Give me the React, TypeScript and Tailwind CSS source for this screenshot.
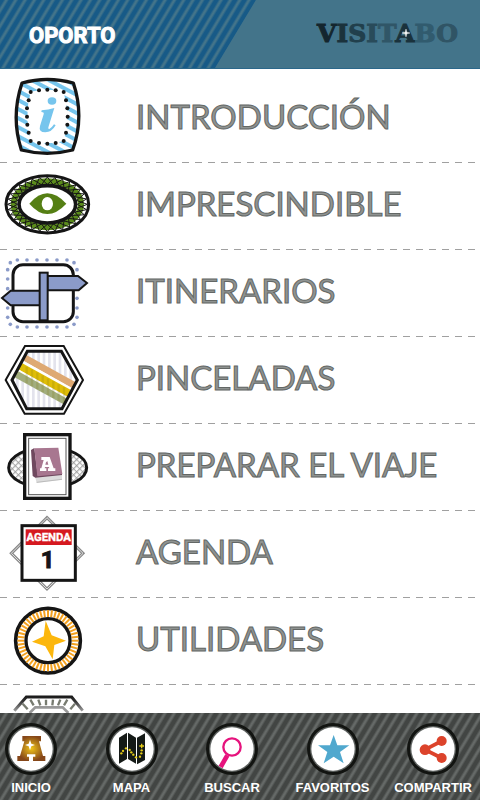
import React from 'react';

const IntroIcon = () => (
  <svg viewBox="0 18 300 261" className="w-[100px] h-[87px] shrink-0" aria-hidden="true">
    <defs>
      <pattern id="introStripes" width="24" height="24" patternUnits="userSpaceOnUse" patternTransform="rotate(28)">
        <rect width="24" height="24" fill="#fff" />
        <rect width="24" height="12" fill="#76c5ed" />
      </pattern>
    </defs>
    <path d="M66 39Q142 17 220 39Q254 140 218 240Q142 260 64 240Q32 140 66 39Z" fill="url(#introStripes)" stroke="#151515" strokeWidth="10" strokeLinejoin="round" />
    <path d="M92 65Q142 53 191 65Q212 140 191 213Q142 227 92 213Q72 140 92 65Z" fill="#fff" />
    {[
      [92, 66], [117, 61], [142, 59], [167, 61], [191, 66],
      [86, 91], [81, 115], [81, 140], [82, 164], [86, 188],
      [198, 91], [202, 115], [203, 140], [202, 164], [198, 188],
      [92, 213], [117, 219], [142, 221], [167, 219], [191, 213],
    ].map(([x, y]) => <circle key={`${x}-${y}`} cx={x} cy={y} r="6" fill="#151515" />)}
    <ellipse cx="156" cy="93" rx="13" ry="11" fill="#76c5ed" />
    <path d="M125 121Q145 119 163 114L146 169Q143 178 148 177Q154 175 162 163L167 166Q155 187 136 187Q115 187 120 168L131 133Q133 126 124 126Z" fill="#76c5ed" />
  </svg>
);

const EyeIcon = () => {
  const zigzag = (offset: number) =>
    Array.from({ length: 33 }, (_, i) => {
      const a = (i / 32) * Math.PI * 2;
      const out = (i + offset) % 2 === 0;
      return `${142 + Math.cos(a) * (out ? 120 : 90)},${118 + Math.sin(a) * (out ? 82 : 60)}`;
    }).join(' ');

  return (
    <svg viewBox="0 -6 300 261" className="w-[100px] h-[87px] shrink-0" aria-hidden="true">
      <ellipse cx="142" cy="118" rx="124" ry="86" fill="#fff" stroke="#151515" strokeWidth="9" />
      <ellipse cx="142" cy="118" rx="101" ry="69" fill="none" stroke="#5b8c1c" strokeWidth="18" />
      <polyline points={zigzag(0)} fill="none" stroke="#151515" strokeWidth="3" />
      <polyline points={zigzag(1)} fill="none" stroke="#151515" strokeWidth="3" />
      <ellipse cx="142" cy="118" rx="85" ry="56" fill="#fff" stroke="#151515" strokeWidth="11" />
      <path d="M88 116Q115 85 142 85Q170 85 199 116Q170 147 142 147Q115 147 88 116Z" fill="#557f14" />
      <ellipse cx="142" cy="116" rx="17" ry="20" fill="#fff" />
    </svg>
  );
};

const SignIcon = () => (
  <svg viewBox="0 0 300 261" className="w-[100px] h-[87px] shrink-0" aria-hidden="true">
    {[52, 81, 111, 141, 171, 201].map((x) => (
      <g key={x} fill="#8b9bc9">
        <circle cx={x} cy="30" r="5.5" />
        <circle cx={x} cy="231" r="5.5" />
      </g>
    ))}
    {[38, 59, 87, 116, 145, 174, 202, 223].map((y, i) => {
      const edge = i === 0 || i === 7;
      return (
        <g key={y} fill="#8b9bc9">
          <circle cx={edge ? 31 : 23} cy={y} r="5.5" />
          <circle cx={edge ? 222 : 231} cy={y} r="5.5" />
        </g>
      );
    })}
    <rect x="39" y="44" width="181" height="171" rx="30" fill="#fff" stroke="#151515" strokeWidth="9" />
    <path d="M142 78H234L261 99L236 121H142Z" fill="#8b9bc9" stroke="#151515" strokeWidth="6" />
    <path d="M120 122H32L6 144L32 166H120Z" fill="#8b9bc9" stroke="#151515" strokeWidth="6" />
    <rect x="119" y="68" width="24" height="143" fill="#8b9bc9" stroke="#151515" strokeWidth="6" />
  </svg>
);

const HexagonIcon = () => (
  <svg viewBox="0 -3 300 261" className="w-[100px] h-[87px] shrink-0" aria-hidden="true">
    <defs>
      <clipPath id="hexClip">
        <path d="M82 42H184L232 126L186 210H80L36 126Z" />
      </clipPath>
    </defs>
    <path d="M75 24H191L249 126L192 227H74L17 126Z" fill="#fff" stroke="#151515" strokeWidth="6" />
    <g clipPath="url(#hexClip)">
      {[48, 64, 80, 96, 112, 128, 144, 160, 176, 192, 208, 224].map((x) => (
        <rect key={x} x={x} y="35" width="8" height="180" fill="#e3e3ec" />
      ))}
      <path d="M78 50L230 134V158L66 66Z" fill="#dea973" />
      <path d="M66 66L220 152L214 160L58 74Z" fill="#fff" />
      <path d="M60 72L214 157V182L52 92Z" fill="#dfbd08" />
      <path d="M52 92L206 180L200 186L46 98Z" fill="#fff" />
      <path d="M44 94L204 184V206L44 118Z" fill="#a2ad7d" />
      {[80, 96, 112, 128, 144, 160, 176, 192].map((x) => (
        <path key={x} d={`M${x} ${x * 0.55 + 42}V${x * 0.55 + 92}`} stroke="#7c7410" strokeOpacity=".2" strokeWidth="7" />
      ))}
    </g>
    <path d="M82 40H184L232 126L186 212H80L36 126Z" fill="none" stroke="#151515" strokeWidth="9" />
  </svg>
);

const BookIcon = () => (
  <svg viewBox="0 -3 300 261" className="w-[100px] h-[87px] shrink-0" aria-hidden="true">
    <defs>
      <pattern id="lattice" width="13" height="13" patternUnits="userSpaceOnUse" patternTransform="rotate(45)">
        <rect width="13" height="13" fill="#fff" />
        <path d="M0 2H13M2 0V13" stroke="#999" strokeWidth="3" />
      </pattern>
    </defs>
    <ellipse cx="143" cy="128" rx="117" ry="61" fill="url(#lattice)" stroke="#151515" strokeWidth="9" />
    <rect x="74" y="29" width="136" height="191" fill="#fff" stroke="#151515" strokeWidth="10" />
    <rect x="86" y="40" width="112" height="169" fill="#fff" stroke="#555" strokeWidth="3" />
    <path d="M105 155L186 148V164L110 174Z" fill="#ddd" />
    <path d="M110 172L186 163" stroke="#aaa" strokeWidth="2" />
    <path d="M93 75L103 69L113 149L186 146V150L106 158L98 153Z" fill="#70495f" />
    <path d="M103 70L175 68L187 147L112 154Z" fill="#a87790" />
    <path d="M124 96H149L161 130H166V138H144V130H148L147 126H135L134 130H139V138H120V130H124L131 105H124ZM138 112L136 119H145L142 108Z" fill="#fff" fillRule="evenodd" />
  </svg>
);

const CalendarIcon = () => (
  <svg viewBox="0 3 300 261" className="w-[100px] h-[87px] shrink-0" aria-hidden="true">
    <path d="M141 23L249 130L141 237L34 130Z" fill="#fff" stroke="#888" strokeWidth="9" />
    <path d="M141 23L249 130L141 237L34 130Z" fill="none" stroke="#ddd" strokeWidth="3" />
    <rect x="66" y="47" width="160" height="164" fill="#fff" stroke="#151515" strokeWidth="9" />
    <rect x="77" y="58" width="138" height="47" fill="#d51920" />
    <text x="146" y="94" textAnchor="middle" fill="#fff" stroke="#fff" strokeWidth="1" fontSize="34" fontWeight="700" className="font-['Roboto',sans-serif]">AGENDA</text>
    <text x="143" y="173" textAnchor="middle" fill="#151515" stroke="#151515" strokeWidth="3" fontSize="72" fontWeight="700" className="font-['Roboto',sans-serif]">1</text>
  </svg>
);

const CompassIcon = () => (
  <svg viewBox="0 0 300 261" className="w-[100px] h-[87px] shrink-0" aria-hidden="true">
    <circle cx="144" cy="128" r="97" fill="#fff" stroke="#151515" strokeWidth="11" />
    {Array.from({ length: 48 }, (_, i) => (
      <path key={i} d="M144 36V57" stroke="#f4a11f" strokeWidth="6" transform={`rotate(${i * 7.5} 144 128)`} />
    ))}
    <circle cx="144" cy="128" r="66" fill="#fff" stroke="#151515" strokeWidth="10" />
    <path d="M137 68L155 112L198 128L163 141L158 184L136 145L96 131L131 115Z" fill="#fcb70d" />
  </svg>
);

const PartialIcon = () => (
  <svg viewBox="0 261 300 261" className="w-[100px] h-[87px] shrink-0" aria-hidden="true">
    <defs>
      <linearGradient id="partialFade" x1="0" y1="292" x2="0" y2="343" gradientUnits="userSpaceOnUse">
        <stop offset="0" stopColor="#151515" />
        <stop offset=".35" stopColor="#333" />
        <stop offset="1" stopColor="#aaa" />
      </linearGradient>
    </defs>
    <path d="M43 338L79 297H215L248 338" fill="none" stroke="url(#partialFade)" strokeWidth="9" />
    <path d="M89 345L106 328H188L205 345" fill="none" stroke="#999" strokeWidth="8" />
    <path d="M68 317L83 334M91 305L101 322M115 305L121 322M138 305V322M159 305L157 322M181 305L174 322M202 305L192 322M225 317L211 334" stroke="#777b70" strokeWidth="7" />
  </svg>
);

const sections = [
  { label: 'INTRODUCCIÓN', Icon: IntroIcon },
  { label: 'IMPRESCINDIBLE', Icon: EyeIcon },
  { label: 'ITINERARIOS', Icon: SignIcon },
  { label: 'PINCELADAS', Icon: HexagonIcon },
  { label: 'PREPARAR EL VIAJE', Icon: BookIcon },
  { label: 'AGENDA', Icon: CalendarIcon },
  { label: 'UTILIDADES', Icon: CompassIcon },
  { label: '', Icon: PartialIcon },
];

const brandLetters = [
  ['V', 'text-[#14262e]'],
  ['I', 'text-[#1b323c]'],
  ['S', 'text-[#213f4c]'],
  ['I', 'text-[#294b5a]'],
  ['T', 'text-[#305667]'],
  ['A', 'text-[#1a323c]'],
  ['B', 'text-[#315b6e]'],
  ['O', 'text-[#305465]'],
];

interface TabButtonProps {
  label: string;
  children: React.ReactNode;
}

// Each drawing uses a 156 unit square, centred on the round badge
const TabButton: React.FC<TabButtonProps> = ({ label, children }) => (
  <button type="button" className="flex w-[52px] flex-col items-center">
    <svg viewBox="0 0 156 156" className="w-[52px] h-[52px] shrink-0" aria-hidden="true">
      <circle cx="78" cy="78" r="78" fill="#121411" />
      <circle cx="78" cy="78" r="69" fill="#5d615f" />
      <circle cx="78" cy="78" r="65" fill="#fff" />
      {children}
    </svg>
    <span className="mt-[5px] whitespace-nowrap text-[13px] leading-4 font-bold text-white">{label}</span>
  </button>
);

export default function App() {
  return (
    <div className="flex h-screen flex-col overflow-hidden bg-white font-['Liberation_Sans',sans-serif]">
      <header className="relative flex h-[69px] shrink-0 items-center justify-between border-b border-[#2b678a] bg-[#43748a] pl-[29px] pr-[22px]">
        <div className="absolute inset-y-0 left-0 w-[256px] bg-[repeating-linear-gradient(121deg,#175a87_0_3px,#43748a_5px_6px,#175a87_8px)] [clip-path:polygon(0_0,100%_0,84%_100%,0_100%)]" />
        <h1 className="relative pt-1 text-[22px] leading-8 font-bold text-white [-webkit-text-stroke:1px_#fff] font-['Roboto',sans-serif]">OPORTO</h1>
        <div className="relative text-[25px] leading-8 font-bold [-webkit-text-stroke:1px] font-['DejaVu_Serif',serif]">
          {brandLetters.map(([letter, color], i) => (
            <span key={i} className={color}>{letter}</span>
          ))}
          <svg viewBox="0 0 20 20" className="absolute left-[85px] top-[11px] w-2 h-2" aria-hidden="true">
            <path d="M10 0L12 8L20 10L12 12L10 20L8 12L0 10L8 8Z" fill="#fff" stroke="#fff" />
          </svg>
        </div>
      </header>

      <main className="min-h-0 flex-1 overflow-hidden">
        <ul className="pt-[7px]">
          {sections.map(({ label, Icon }) => (
            <li key={Icon.name}>
              <a href="#" className="flex h-[86px] items-center">
                <Icon />
                <span className="ml-9 pb-1.5 whitespace-nowrap text-[33px] leading-10 text-[#8f9391] [-webkit-text-stroke:1px_#636765] font-['Lato',sans-serif]">{label}</span>
              </a>
              <div className="h-px bg-[repeating-linear-gradient(90deg,#a0a0a0_0_7px,transparent_7px_13px)]" />
            </li>
          ))}
        </ul>
      </main>

      <footer className="h-[87px] shrink-0 bg-[repeating-linear-gradient(121deg,#424543_0_3px,#656967_5px_6px,#424543_8px)]">
        <nav className="flex justify-between pt-[10px] pl-[5px] pr-[21px]">
          <TabButton label="INICIO">
            <defs>
              <radialGradient id="gold">
                <stop offset="0" stopColor="#f0c419" />
                <stop offset="1" stopColor="#864719" />
              </radialGradient>
            </defs>
            <path d="M52 39H108V55H102L114 99H121V114H84V101H91V94H66V101H72V114H37V99H45L58 55H52Z" fill="url(#gold)" />
            <path d="M75 50L79 62L90 66L79 70L75 82L71 70L60 66L71 62Z" fill="#fff" />
          </TabButton>
          <TabButton label="MAPA">
            <path d="M39 44L63 29V108L39 122ZM66 29L90 44V122L66 108ZM93 44L117 31V111L93 124Z" fill="#151a17" />
            {[[46, 91], [51, 84], [60, 76], [71, 81], [76, 88], [82, 95], [90, 103], [102, 101], [106, 91], [107, 82]].map(([x, y]) => (
              <circle key={x} cx={x} cy={y} r="3.5" fill="#e3ca17" />
            ))}
            <path d="M107 62V76M100 69H114" stroke="#e3ca17" strokeWidth="4" />
          </TabButton>
          <TabButton label="BUSCAR">
            <circle cx="78" cy="72" r="26" fill="none" stroke="#e6137d" strokeWidth="7" />
            <path d="M64 97L44 132" stroke="#e6137d" strokeWidth="14" />
          </TabButton>
          <TabButton label="FAVORITOS">
            <path d="M80 36L91 67H127L99 87L110 121L80 101L50 121L61 87L33 67H69Z" fill="#50a8ce" />
          </TabButton>
          <TabButton label="COMPARTIR">
            <path d="M104 54L54 80L104 105" fill="none" stroke="#dc432b" strokeWidth="11" />
            <circle cx="54" cy="80" r="16" fill="#dc432b" />
            <circle cx="104" cy="54" r="15" fill="#dc432b" />
            <circle cx="104" cy="105" r="15" fill="#dc432b" />
          </TabButton>
        </nav>
      </footer>
    </div>
  );
}
